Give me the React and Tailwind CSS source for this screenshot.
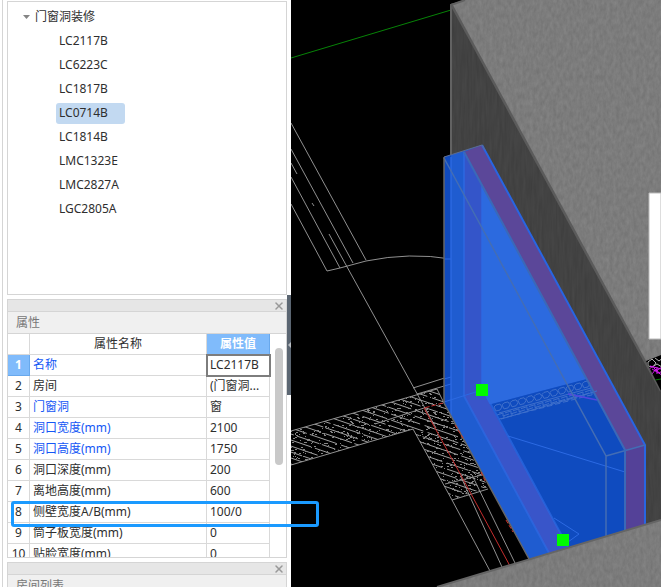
import React, { useState } from 'react';
import { X } from 'lucide-react';

const treeItems = ['LC2117B', 'LC6223C', 'LC1817B', 'LC0714B', 'LC1814B', 'LMC1323E', 'LMC2827A', 'LGC2805A'];

const properties = [
  { name: '名称', value: 'LC2117B', linked: true },
  { name: '房间', value: '(门窗洞...' },
  { name: '门窗洞', value: '窗', linked: true },
  { name: '洞口宽度(mm)', value: '2100', linked: true },
  { name: '洞口高度(mm)', value: '1750', linked: true },
  { name: '洞口深度(mm)', value: '200' },
  { name: '离地高度(mm)', value: '600' },
  { name: '侧壁宽度A/B(mm)', value: '100/0' },
  { name: '筒子板宽度(mm)', value: '0' },
  { name: '贴脸宽度(mm)', value: '0' },
];

// small seeded generator so the hatching is the same on every render
const makeRandom = (seed) => () => {
  seed = (seed * 16807) % 2147483647;
  return seed / 2147483647;
};

const buildHatch = () => {
  const rand = makeRandom(42);
  let d = '';
  for (let row = 0; row < 46; row++) {
    let x = 285 - rand() * 20;
    while (x < 495) {
      const len = 12 + rand() * 22;
      const y = 300 + row * 6 + (x - 285) * 0.34;
      d += `M${x.toFixed(1)} ${y.toFixed(1)}l${len.toFixed(1)} ${(len * 0.34).toFixed(1)}`;
      x += len + 2 + rand() * 3;
    }
  }
  return d;
};

const buildSpecks = () => {
  const rand = makeRandom(7);
  let d = '';
  for (let i = 0; i < 1500; i++) {
    const x = Math.round(288 + rand() * 205);
    const y = Math.round(385 + rand() * 116) + 0.5;
    d += `M${x} ${y}h${rand() > 0.5 ? 2 : 1}`;
  }
  return d;
};

const hatch = buildHatch();
const specks = buildSpecks();
const stones = Array.from({ length: 12 }, (_, i) => ({ x: 497 + i * 8, y: 408 - i * 2.1 }));

const Scene = () => (
  <svg
    className="block h-full w-full"
    viewBox="291 0 370 587"
    preserveAspectRatio="xMinYMin slice"
    role="img"
    aria-label="3D view"
  >
    <defs>
      <filter id="concrete" x="0" y="0" width="100%" height="100%" colorInterpolationFilters="sRGB">
        <feTurbulence type="fractalNoise" baseFrequency="0.3 0.16" numOctaves="3" seed="4" />
        <feColorMatrix values="0.09 0 0 0 0.44  0.09 0 0 0 0.44  0.09 0 0 0 0.44  0 0 0 0 1" />
        <feComposite in2="SourceGraphic" operator="in" />
      </filter>
      <filter id="wall" x="0" y="0" width="100%" height="100%" colorInterpolationFilters="sRGB">
        <feTurbulence type="fractalNoise" baseFrequency="0.4 0.04" numOctaves="2" seed="9" />
        <feColorMatrix values="0.05 0 0 0 0.235  0.05 0 0 0 0.235  0.05 0 0 0 0.235  0 0 0 0 1" />
        <feComposite in2="SourceGraphic" operator="in" />
      </filter>
      <clipPath id="hatchArea">
        <path d="M291 431L437 389L444 403L488 487L452 500L413 429L291 465Z" />
      </clipPath>
      <clipPath id="cornerArea">
        <path d="M646 361L661 355V391Z" />
      </clipPath>
    </defs>

    <rect x="291" width="370" height="587" fill="#000" />
    <path d="M291 58L451 10" stroke="#078307" fill="none" />

    {/* room block */}
    <path d="M451 4L661 391V521L530 560L451 413Z" fill="#414141" filter="url(#wall)" />
    <path d="M451 4L465 0H661V391Z" fill="#797979" filter="url(#concrete)" />
    <path d="M451 157V5L465 0" stroke="#626262" strokeWidth="2" fill="none" />
    <path d="M451 4L661 391" stroke="#5b5b5b" strokeWidth="2.5" fill="none" />
    <path d="M646 361L661 355V391Z" fill="#000" />
    <g clipPath="url(#cornerArea)" fill="none">
      <path d="M648 362l4-3 4 4-3 4-5-1zM655 358l4 3 5-4M652 367l5-3 5 3" stroke="#b5b5b5" />
      <path
        d="M648 370l5-4 3 5 6-4M652 374l4-5 3 4 5-3M650 366l11 3M657 367v7M652 369l10 6"
        stroke="#d51cf0"
      />
      <path d="M655 380L661 379" stroke="#078307" />
    </g>

    {/* floor plan lines */}
    <g stroke="#a0a0a0" strokeWidth="0.9" fill="none">
      <path d="M291 123L366 260M291 149L353 263M291 163L297 174M291 177L340 268M291 204L327 271M329 234L346 265L436 428" />
      <path d="M327 271L340 268L366 261Q410 252 451 259" />
      <path d="M413 388L451 376M417 394L451 384" />
      <path d="M312 203l2 3" />
      <path d="M291 431L437 389L444 403M291 465L413 429L452 500L490 571M452 500L488 489" />
      <path d="M461 477L502 567M472 475L515 563M445 484L482 475" />
      <path d="M375 424L424 408" />
    </g>
    <g clipPath="url(#hatchArea)" fill="none">
      <path d={hatch} stroke="#a0a0a0" />
      <path d={specks} stroke="#858585" />
    </g>
    <g stroke="#c52d2d" fill="none">
      <path d="M443 403L424 408" strokeDasharray="5 2" />
      <path d="M424 408L463 479L510 566" />
    </g>

    {/* selected opening */}
    <path d="M444 157L482 145L645 445V525L529 559L444 403Z" fill="#1f5cd0" />
    <path d="M444 157L451 155V416L444 403Z" fill="#104abd" />
    <path d="M464 152L482 186V390L464 396Z" fill="#3455c9" />
    <path d="M482 186L587 379L488 405L482 390Z" fill="#2c6adf" />
    <path d="M488 405L587 379L625 450V531L568 548Z" fill="#0f4bbf" />
    <path d="M464 152L482 145L645 445L625 450Z" fill="#5b4799" />
    <path d="M625 450L645 445V525L625 531Z" fill="#544198" />
    <path d="M464 396L482 390L568 547L549 553Z" fill="#3955c9" />

    <g fill="none" stroke="#3f70cc">
      {stones.map((s) => (
        <path
          key={s.x}
          d={`M${s.x - 3} ${s.y - 1}l2-2 4-1 2 3-2 3-4 1zM${s.x} ${s.y + 7}l6-2v3l6-2M${s.x + 2} ${s.y + 11}l5-1v-3`}
        />
      ))}
      <path d="M501 419L594 392" />
      <path d="M499 413L591 388" />
    </g>
    <g fill="none" stroke="#2c6ae3">
      <path d="M508 436L625 472M554 518L579 534L568 542" />
      <path d="M451 157V415M464 152V396L549 553M482 186V388L568 547" strokeWidth="2" strokeOpacity="0.7" />
      <path d="M444 402L482 390M444 259h7M444 379l7-2M444 386l7-2" />
      <path d="M482 145L645 445V525" stroke="#2865e2" strokeWidth="2" />
    </g>
    <path d="M568 394L597 400" stroke="#5046e0" strokeWidth="1.5" fill="none" />
    <g fill="none" stroke="#446db4" strokeWidth="1.5">
      <path d="M444 158L606 456V537M606 456L645 445" />
      <path d="M464 152L625 450V531" stroke="#3a69b8" strokeWidth="2" />
    </g>
    <path d="M444 157V403L529 559" stroke="#666" strokeWidth="1.5" fill="none" />
    <path d="M444 157L482 145L485 150" stroke="#5c6c91" fill="none" />
    <path
      d="M455 425L463 438M481 472L486 483M506 520L513 532"
      stroke="#d1352c"
      strokeDasharray="4 2"
      fill="none"
    />

    {/* slab */}
    <path d="M437 587L661 520V587Z" fill="#777" filter="url(#concrete)" />
    <path d="M437 587L661 520" stroke="#656565" strokeWidth="2" fill="none" />

    <path d="M476 384h12v12h-12zM557 534h12v12h-12z" fill="#00fc00" />
    <path d="M661 193H649V339H661Z" fill="#fff" stroke="#bbb" />
  </svg>
);

const PanelHeader = ({ title }) => (
  <>
    <div className="flex h-3 shrink-0 items-center justify-end border-b border-[#d5d5d5] bg-[#e6e6e6] pr-px">
      <button type="button" aria-label={`关闭${title}`} className="text-[#999]">
        <X size={12} strokeWidth={3} />
      </button>
    </div>
    <h2 className="h-[22px] shrink-0 border-b border-[#d5d5d5] bg-[#f0f0f0] pl-2 leading-[21px] text-[#777]">{title}</h2>
  </>
);

const TreePanel = () => {
  const [selected, setSelected] = useState('LC0714B');

  return (
    <section className="mt-px min-h-0 flex-1 overflow-hidden border border-[#d5d5d5] bg-white pt-[3px]">
      <button type="button" className="flex h-6 items-center pl-[15px] text-left">
        <svg className="mr-[5px] h-1 w-[7px]" viewBox="0 0 7 4" aria-hidden="true">
          <path d="M0 0h7L3.500 4z" fill="#858585" />
        </svg>
        门窗洞装修
      </button>
      <ul>
        {treeItems.map((item) => (
          <li key={item} className="flex h-6 items-center pl-12">
            <button
              type="button"
              onClick={() => setSelected(item)}
              className={`h-[21px] min-w-[69px] rounded-[3px] px-[3px] text-left ${
                item === selected ? 'bg-[#c2d9f1]' : ''
              }`}
            >
              {item}
            </button>
          </li>
        ))}
      </ul>
    </section>
  );
};

const PropertyPanel = () => (
  <section className="relative mt-1 flex h-[259px] shrink-0 flex-col border border-[#d5d5d5] bg-white">
    <PanelHeader title="属性" />
    <div className="flex min-h-0 flex-1 overflow-hidden">
      <table className="min-w-0 flex-1 table-fixed border-separate border-spacing-0 self-start">
        <colgroup>
          <col className="w-[22px]" />
          <col />
          <col className="w-[63px]" />
        </colgroup>
        <thead>
          <tr className="h-[21px]">
            <th aria-label="序号" className="border-r border-b border-[#d9d9d9] p-0" />
            <th className="border-r border-b border-[#d9d9d9] p-0 font-normal">属性名称</th>
            <th className="border-r border-b border-[#68a8ec] bg-[#80bbfb] p-0 font-bold text-white">属性值</th>
          </tr>
        </thead>
        <tbody>
          {properties.map((p, i) => (
            <tr key={p.name} className="h-[21px]">
              <th
                scope="row"
                className={`border-r border-b p-0 ${
                  i === 0 ? 'border-[#68a8ec] bg-[#80bbfb] font-bold text-white' : 'border-[#d9d9d9] font-normal'
                }`}
              >
                {i + 1}
              </th>
              <td
                className={`border-r border-b border-[#d9d9d9] p-0 pl-[3px] whitespace-nowrap ${
                  p.linked ? 'text-[#1457f5]' : ''
                }`}
              >
                {p.name}
              </td>
              <td
                className={`border-r border-b border-[#d9d9d9] p-0 pl-[3px] whitespace-nowrap ${
                  i === 0 ? 'outline-2 -outline-offset-1 outline-[#7d7d7d]' : ''
                }`}
              >
                {p.value}
              </td>
            </tr>
          ))}
        </tbody>
      </table>
      <div className="w-4 shrink-0 pt-3.5 pl-[5px]">
        <div className="h-[117px] w-2 rounded-full bg-[#c9c9c9]" />
      </div>
    </div>
    {/* callout around the side wall width row */}
    <div className="pointer-events-none absolute top-[201px] left-[3px] z-10 h-[26px] w-[308px] rounded-[3px] border-3 border-[#1a9aff]" />
  </section>
);

const App = () => (
  <div className="flex h-screen overflow-hidden bg-white font-['Noto_Sans','Noto_Sans_CJK_SC',sans-serif] text-[12px] leading-5 text-[#2e2e2e]">
    <aside className="relative z-10 flex w-[291px] shrink-0 flex-col pl-0.5">
      <div className="flex min-h-0 flex-1 flex-col border-l border-[#d5d5d5] pr-1 pl-1">
        <TreePanel />
        <PropertyPanel />
        <section className="mt-1 flex h-[25px] shrink-0 flex-col overflow-hidden border border-b-0 border-[#d5d5d5]">
          <PanelHeader title="房间列表" />
        </section>
      </div>
      <button
        type="button"
        aria-label="折叠面板"
        className="absolute right-0 bottom-48 flex h-[100px] w-1 items-center justify-end bg-[#5b6672]"
      >
        <svg className="h-1.5 w-[3px]" viewBox="0 0 3 6" aria-hidden="true">
          <path d="M3 0v6L0 3z" fill="#b9bec4" />
        </svg>
      </button>
    </aside>
    <main className="min-w-0 flex-1 bg-black">
      <Scene />
    </main>
  </div>
);

export default App;
